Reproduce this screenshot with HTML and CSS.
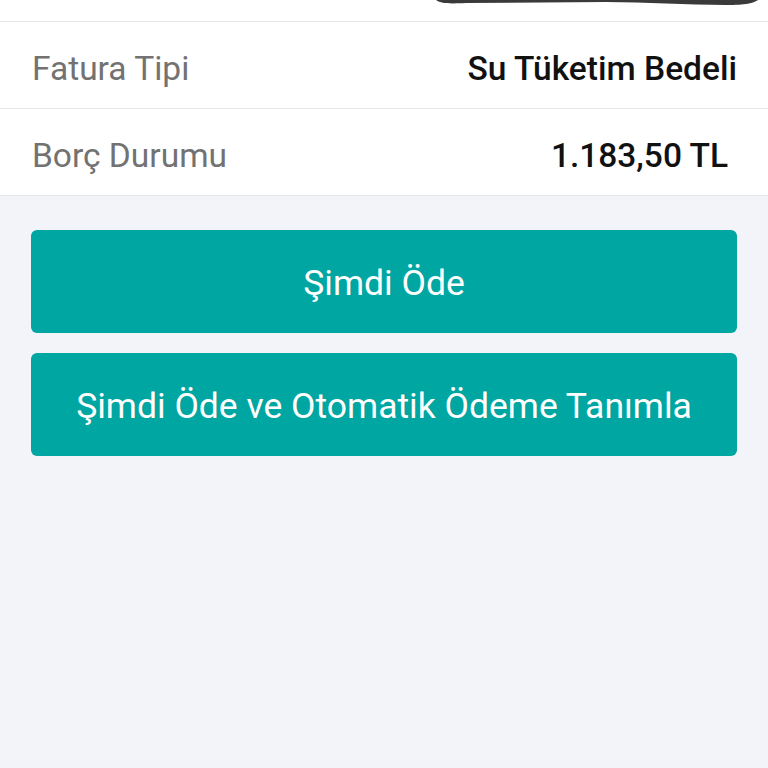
FILE: index.html
```html
<!DOCTYPE html>
<html lang="tr">
<head>
    <meta charset="UTF-8">
    <meta name="viewport" content="width=device-width, initial-scale=1.0">
    <title>Fatura Detayı</title>
    <link rel="stylesheet" href="styles.css">
</head>
<body>
    <div class="top">
        <svg class="scribble" width="330" height="8" viewBox="0 0 330 8">
            <path d="M0 0 C4 3 10 4 30 3 L170 2 C210 2 250 5 290 5 C310 5 318 3 322 0 Z" fill="#3a3a3a"/>
        </svg>
    </div>

    <div class="info">
        <div class="row">
            <span class="label">Fatura Tipi</span>
            <span class="value">Su Tüketim Bedeli</span>
        </div>
        <div class="row">
            <span class="label">Borç Durumu</span>
            <span class="value amount">1.183,50 TL</span>
        </div>
    </div>

    <div class="actions">
        <button class="pay">Şimdi Öde</button>
        <button class="pay">Şimdi Öde ve Otomatik Ödeme Tanımla</button>
    </div>
</body>
</html>
```

FILE: styles.css
```css
body {
    margin: 0;
    padding: 0;
    font-family: Roboto, "Noto Sans", sans-serif;
    background-color: #f3f4f9;
    min-height: 100vh;
}

.top {
    height: 21px;
    background-color: #fff;
    border-bottom: 1px solid #e6e6e9;
    position: relative;
}

.scribble {
    position: absolute;
    top: 0;
    left: 436px;
}

.info {
    background-color: #fff;
}

.row {
    display: flex;
    justify-content: space-between;
    align-items: center;
    box-sizing: border-box;
    height: 87px;
    padding: 6px 31px 0 32px;
    border-bottom: 1px solid #e6e6e9;
}

.label {
    font-size: 33.5px;
    color: #727272;
}

.value {
    font-size: 33.5px;
    font-weight: 500;
    color: #111;
}

.amount {
    margin-right: 9px;
}

.actions {
    display: flex;
    flex-direction: column;
    gap: 20px;
    padding: 34px 31px 0 31px;
}

.pay {
    height: 103px;
    padding: 3px 0 0 0;
    border: none;
    border-radius: 6px;
    background-color: #00a6a1;
    color: #fff;
    font-family: Roboto, "Noto Sans", sans-serif;
    font-size: 35.5px;
    cursor: pointer;
}
```
